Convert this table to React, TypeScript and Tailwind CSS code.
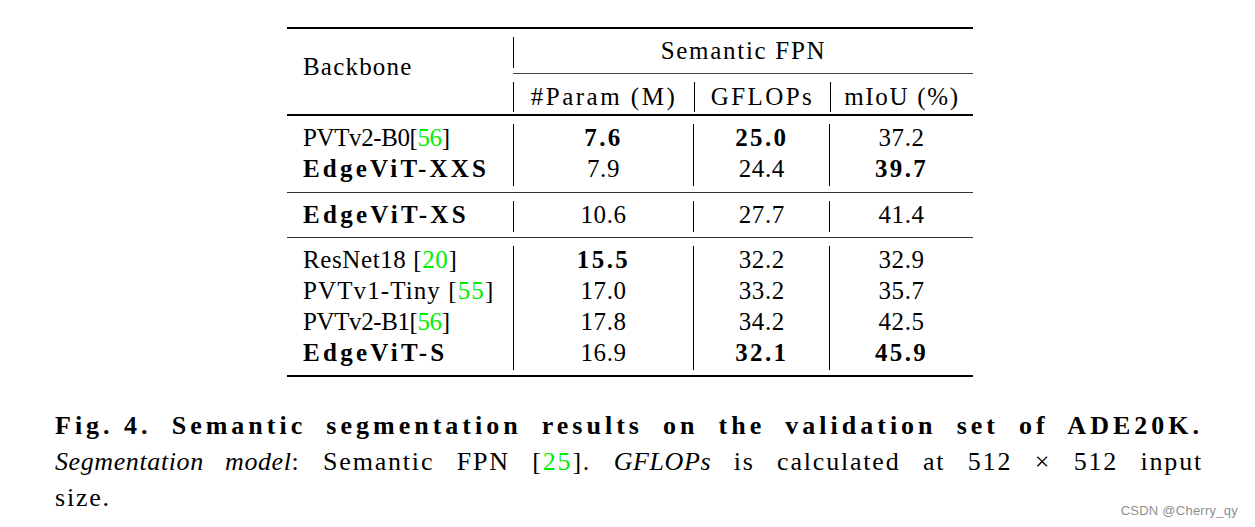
import React from 'react';

interface Row {
  name: string;
  cite?: string;
  citeSpace?: boolean;
  boldName?: boolean;
  nameTrack: string;
  values: string[];
  boldValues: boolean[];
}

const groups: Row[][] = [
  [
    { name: 'PVTv2-B0', cite: '56', nameTrack: 'tracking-[-0.4px]', values: ['7.6', '25.0', '37.2'], boldValues: [true, true, false] },
    { name: 'EdgeViT-XXS', boldName: true, nameTrack: 'tracking-[3.2px]', values: ['7.9', '24.4', '39.7'], boldValues: [false, false, true] },
  ],
  [
    { name: 'EdgeViT-XS', boldName: true, nameTrack: 'tracking-[3.3px]', values: ['10.6', '27.7', '41.4'], boldValues: [false, false, false] },
  ],
  [
    { name: 'ResNet18', cite: '20', citeSpace: true, nameTrack: 'tracking-[0.6px]', values: ['15.5', '32.2', '32.9'], boldValues: [true, false, false] },
    { name: 'PVTv1-Tiny', cite: '55', citeSpace: true, nameTrack: 'tracking-[1.1px]', values: ['17.0', '33.2', '35.7'], boldValues: [false, false, false] },
    { name: 'PVTv2-B1', cite: '56', nameTrack: 'tracking-[-0.4px]', values: ['17.8', '34.2', '42.5'], boldValues: [false, false, false] },
    { name: 'EdgeViT-S', boldName: true, nameTrack: 'tracking-[3.3px]', values: ['16.9', '32.1', '45.9'], boldValues: [false, true, true] },
  ],
];

const colWidths = ['w-[181px]', 'w-[136px]', 'w-[144px]'];

const Cite = ({ n }: { n: string }) => (
  <span>
    [<span className="text-[#00ee00]">{n}</span>]
  </span>
);

const Group = ({ rows, pb }: { rows: Row[]; pb: string }) => (
  <div className={`flex pt-[8px] ${pb}`}>
    <div className="w-[226px] flex flex-col">
      {rows.map((r, i) => (
        <div
          key={i}
          className={`h-[31px] flex items-center pl-[16px] pb-[5px] whitespace-pre ${r.nameTrack} ${r.boldName ? 'font-bold' : ''}`}
        >
          {r.name}
          {r.citeSpace && ' '}
          {r.cite && <Cite n={r.cite} />}
        </div>
      ))}
    </div>
    {colWidths.map((w, c) => (
      <div key={c} className={`${w} flex flex-col border-l border-black`}>
        {rows.map((r, i) => (
          <div
            key={i}
            className={`h-[31px] flex items-center justify-center pb-[5px] ${r.boldValues[c] ? 'font-bold tracking-[2.4px]' : 'tracking-[0.6px]'}`}
          >
            {r.values[c]}
          </div>
        ))}
      </div>
    ))}
  </div>
);

const App: React.FC = () => {
  return (
    <div className="w-[1255px] h-[527px] bg-white text-black font-[family-name:Liberation_Serif,serif] relative overflow-hidden">
      <div className="ml-[55px] w-[1148px] pt-[27px]">
        {/* Table */}
        <div className="ml-[232px] w-[686px] text-[25px] leading-none">
          <div className="h-[2px] bg-black" />

          {/* Header */}
          <div className="flex">
            <div className="w-[226px] flex items-center pl-[16px] pb-[10px] tracking-[1.2px]">Backbone</div>
            <div className="flex-1 flex flex-col pt-[8px] pb-[2px]">
              <div className="h-[31px] border-l border-black flex items-center justify-center pb-[4px] tracking-[1.7px]">
                Semantic FPN
              </div>
              <div className="h-[5px]" />
              <div className="h-px bg-[#444]" />
              <div className="h-[8px]" />
              <div className="flex h-[30px]">
                <div className="w-[181px] border-l border-black flex items-center justify-center pb-[2px] tracking-[2.5px]">
                  #Param (M)
                </div>
                <div className="w-[136px] border-l border-black flex items-center justify-center pb-[2px] tracking-[2.4px]">
                  GFLOPs
                </div>
                <div className="w-[143px] border-l border-black flex items-center justify-center pb-[2px] tracking-[1.7px]">
                  mIoU (%)
                </div>
              </div>
            </div>
          </div>

          <div className="h-[2px] bg-black" />
          <Group rows={groups[0]} pb="pb-[6px]" />
          <div className="h-px bg-[#333]" />
          <Group rows={groups[1]} pb="pb-[5px]" />
          <div className="h-px bg-[#333]" />
          <Group rows={groups[2]} pb="pb-[5px]" />
          <div className="h-[2px] bg-black" />
        </div>

        {/* Caption */}
        <div className="mt-[31px] text-[26px] leading-[36px]">
          <div className="font-bold tracking-[4px] text-justify [text-align-last:justify]">
            <span className="inline-block">Fig.&nbsp;4.</span> Semantic segmentation results on the validation set of ADE20K.
          </div>
          <div className="text-justify [text-align-last:justify] tracking-[1.8px]">
            <i className="tracking-[0.6px]">Segmentation model</i>: Semantic FPN <Cite n="25" />.{' '}
            <i className="tracking-[0.6px]">GFLOPs</i> is calculated at 512 × 512 input
          </div>
          <div className="tracking-[1.8px]">size.</div>
        </div>
      </div>

      <div className="absolute right-[17px] top-[504px] text-[13px] leading-none tracking-[0.25px] text-[#8f8f8f] font-[family-name:Liberation_Sans,sans-serif]">
        CSDN @Cherry_qy
      </div>
    </div>
  );
};

export default App;
